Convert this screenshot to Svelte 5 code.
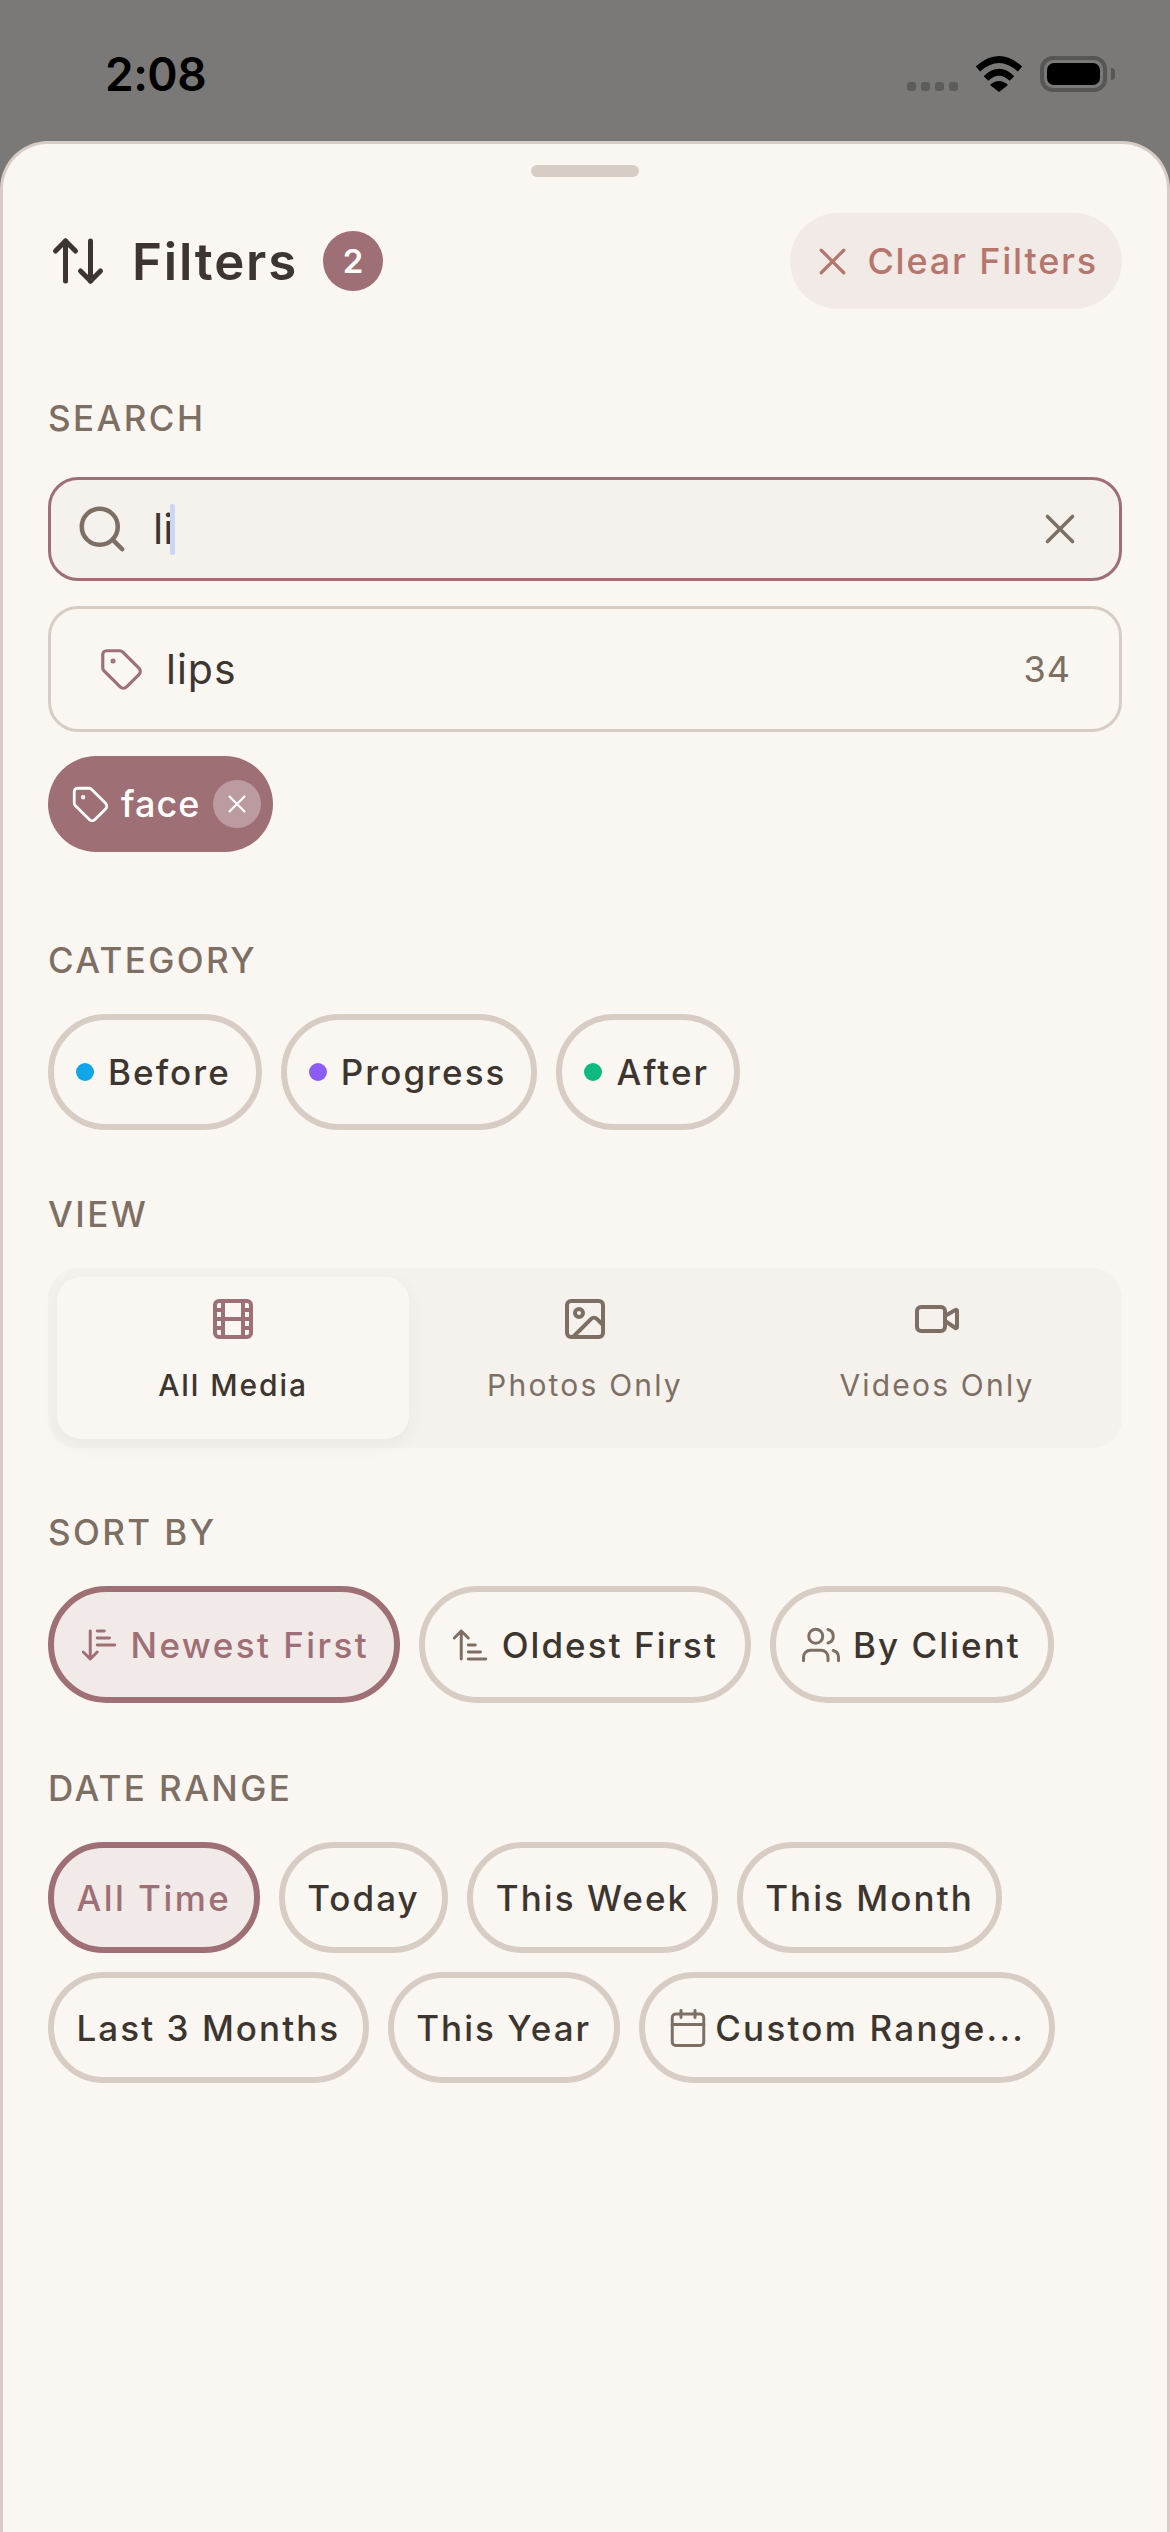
<script>
	const categories = [
		{ label: 'Before', color: '#0ea5e9' },
		{ label: 'Progress', color: '#8b5cf6' },
		{ label: 'After', color: '#10b981' }
	];
	const dates = ['All Time', 'Today', 'This Week', 'This Month', 'Last 3 Months', 'This Year'];
</script>

{#snippet tag(size)}
	<svg class="icon thin" width={size} height={size} viewBox="0 0 24 24">
		<path d="M12.586 2.586A2 2 0 0 0 11.172 2H4a2 2 0 0 0-2 2v7.172a2 2 0 0 0 .586 1.414l8.704 8.704a2.426 2.426 0 0 0 3.42 0l6.58-6.58a2.426 2.426 0 0 0 0-3.42z" />
		<circle cx="7.5" cy="7.5" r=".5" fill="currentColor" />
	</svg>
{/snippet}

{#snippet cross(size)}
	<svg class="icon thin" width={size} height={size} viewBox="0 0 24 24">
		<path d="M18 6 6 18" />
		<path d="m6 6 12 12" />
	</svg>
{/snippet}

<div class="screen">
	<div class="status">
		<span class="time">2:08</span>
		<div class="status-icons">
			<div class="signal"><i></i><i></i><i></i><i></i></div>
			<svg class="wifi" width="48" height="37" viewBox="0 0 48 37">
				<path d="M3 14Q24-5 45 14" fill="none" stroke="#000" stroke-width="6.5" />
				<path d="M11 23.500Q24 11 37 23.500" fill="none" stroke="#000" stroke-width="6.500" />
				<path d="M15 30Q24 22 33 30L24 37Z" fill="#000" />
			</svg>
			<div class="battery"><div class="cell"></div></div>
			<div class="nub"></div>
		</div>
	</div>

	<div class="sheet">
		<div class="handle"></div>

		<div class="header">
			<svg class="icon title-icon" width="60" height="60" viewBox="0 0 24 24">
				<path d="m21 16-4 4-4-4" />
				<path d="M17 20V4" />
				<path d="m3 8 4-4 4 4" />
				<path d="M7 4v16" />
			</svg>
			<h1>Filters</h1>
			<span class="badge">2</span>
			<button class="clear">
				{@render cross(45)}
				Clear Filters
			</button>
		</div>

		<section class="search">
			<h2 class="search-label">SEARCH</h2>
			<div class="input">
				<svg class="icon search-icon" width="54" height="54" viewBox="0 0 24 24">
					<circle cx="11" cy="11" r="8" />
					<path d="m21 21-4.300-4.300" />
				</svg>
				<span class="typed">li</span>
				<span class="caret"></span>
				<span class="input-clear">{@render cross(50)}</span>
			</div>
			<div class="suggestion">
				<span class="sug-tag">{@render tag(45)}</span>
				<span class="sug-name">lips</span>
				<span class="sug-count">34</span>
			</div>
			<div class="tag-chip">
				{@render tag(39)}
				<span class="tag-name">face</span>
				<span class="tag-remove">{@render cross(30)}</span>
			</div>
		</section>

		<section>
			<h2>CATEGORY</h2>
			<div class="chips">
				{#each categories as c}
					<button class="chip tall cat">
						<span class="dot" style="background: {c.color}"></span>
						{c.label}
					</button>
				{/each}
			</div>
		</section>

		<section>
			<h2>VIEW</h2>
			<div class="segments">
				<div class="segment active">
					<svg class="icon" width="48" height="48" viewBox="0 0 24 24">
						<rect x="3" y="3" width="18" height="18" rx="2" />
						<path d="M7 3v18M3 7.500h4M3 12h18M3 16.500h4M17 3v18M17 7.500h4M17 16.500h4" />
					</svg>
					<span>All Media</span>
				</div>
				<div class="segment">
					<svg class="icon" width="48" height="48" viewBox="0 0 24 24">
						<rect x="3" y="3" width="18" height="18" rx="2" />
						<circle cx="9" cy="9" r="2" />
						<path d="m21 15-3.086-3.086a2 2 0 0 0-2.828 0L6 21" />
					</svg>
					<span>Photos Only</span>
				</div>
				<div class="segment">
					<svg class="icon" width="48" height="48" viewBox="0 0 24 24">
						<path d="m16 13 5.223 3.482a.5.5 0 0 0 .777-.416V7.870a.5.5 0 0 0-.752-.432L16 10.500" />
						<rect x="2" y="6" width="14" height="12" rx="2" />
					</svg>
					<span>Videos Only</span>
				</div>
			</div>
		</section>

		<section>
			<h2>SORT BY</h2>
			<div class="chips">
				<button class="chip tall sort selected">
					<svg class="icon thin" width="42" height="42" viewBox="0 0 24 24">
						<path d="m3 16 4 4 4-4M7 20V4M11 4h4M11 8h7M11 12h10" />
					</svg>
					Newest First
				</button>
				<button class="chip tall sort">
					<svg class="icon thin muted" width="42" height="42" viewBox="0 0 24 24">
						<path d="m3 8 4-4 4 4M7 4v16M11 12h4M11 16h7M11 20h10" />
					</svg>
					Oldest First
				</button>
				<button class="chip tall sort">
					<svg class="icon thin muted" width="42" height="42" viewBox="0 0 24 24">
						<path d="M16 21v-2a4 4 0 0 0-4-4H6a4 4 0 0 0-4 4v2" />
						<circle cx="9" cy="7" r="4" />
						<path d="M22 21v-2a4 4 0 0 0-3-3.870" />
						<path d="M16 3.130a4 4 0 0 1 0 7.750" />
					</svg>
					By Client
				</button>
			</div>
		</section>

		<section class="date">
			<h2>DATE RANGE</h2>
			<div class="chips">
				{#each dates as d, i}
					<button class="chip" class:selected={i === 0}>{d}</button>
				{/each}
				<button class="chip custom">
					<svg class="icon thin muted" width="42" height="42" viewBox="0 0 24 24">
						<path d="M8 2v4M16 2v4M3 10h18" />
						<rect x="3" y="4" width="18" height="18" rx="2" />
					</svg>
					Custom Range...
				</button>
			</div>
		</section>
	</div>
</div>

<style>
	:global(body) {
		margin: 0;
	}

	.screen {
		width: 1170px;
		height: 2532px;
		display: flex;
		flex-direction: column;
		background: #7a7977;
		font-family: Inter, 'Noto Sans', sans-serif;
		color: #3d3530;
		overflow: hidden;
	}

	.status {
		height: 141px;
		flex-shrink: 0;
		box-sizing: border-box;
		padding: 50px 55px 0 105px;
		display: flex;
		justify-content: space-between;
		align-items: flex-start;
	}

	.time {
		font-size: 46px;
		line-height: 48px;
		font-weight: 600;
		color: #000;
		letter-spacing: -0.5px;
	}

	.status-icons {
		display: flex;
		align-items: flex-start;
		padding-top: 5px;
	}

	.signal {
		display: flex;
		gap: 5px;
		margin: 27px 17px 0 0;
	}

	.signal i {
		width: 9px;
		height: 9px;
		border-radius: 3px;
		background: #5c5c5b;
	}

	.wifi {
		margin-right: 17px;
	}

	.battery {
		width: 67px;
		height: 36px;
		box-sizing: border-box;
		border: 4px solid #565655;
		border-radius: 13px;
		padding: 3px;
		margin-top: 1px;
	}

	.cell {
		height: 100%;
		background: #000;
		border-radius: 7px;
	}

	.nub {
		width: 4px;
		height: 12px;
		margin: 13px 0 0 4px;
		border-radius: 0 6px 6px 0;
		background: #565655;
	}

	.sheet {
		flex: 1;
		box-sizing: border-box;
		background: #faf7f2;
		border: 3px solid #d7cdc4;
		border-bottom: none;
		border-radius: 48px 48px 0 0;
		padding: 0 45px;
	}

	.handle {
		width: 108px;
		height: 12px;
		margin: 21px auto 0;
		border-radius: 6px;
		background: #d7cdc4;
	}

	.header {
		display: flex;
		align-items: center;
		height: 96px;
		margin-top: 36px;
	}

	.title-icon {
		margin-right: 24px;
	}

	h1 {
		margin: 0;
		font-size: 51px;
		font-weight: 600;
		letter-spacing: 1.8px;
		color: #3d3530;
	}

	.badge {
		width: 60px;
		height: 60px;
		margin-left: 25px;
		border-radius: 50%;
		background: #9e7076;
		color: #fff;
		font-size: 33px;
		font-weight: 600;
		display: flex;
		align-items: center;
		justify-content: center;
	}

	button {
		font: inherit;
		background: none;
		margin: 0;
	}

	.clear {
		margin-left: auto;
		height: 96px;
		border: none;
		border-radius: 48px;
		padding: 0 24px 0 20px;
		background: #f2eae6;
		color: #b5766d;
		font-size: 36px;
		font-weight: 500;
		letter-spacing: 1.8px;
		display: flex;
		align-items: center;
		gap: 12px;
	}

	section {
		margin-top: 63px;
	}

	section.search {
		margin-top: 88px;
		margin-bottom: 87px;
	}

	section.date {
		margin-top: 64px;
	}

	h2 {
		margin: 0 0 33px;
		font-size: 35px;
		line-height: 42px;
		font-weight: 500;
		letter-spacing: 2.4px;
		color: #7d6f64;
	}

	.search-label {
		margin-bottom: 38px;
	}

	.icon {
		display: block;
		flex-shrink: 0;
		fill: none;
		stroke: currentColor;
		stroke-width: 2;
		stroke-linecap: round;
		stroke-linejoin: round;
	}

	.icon.thin {
		stroke-width: 1.7;
	}

	.muted {
		color: #7d6f64;
	}

	.input {
		height: 104px;
		box-sizing: border-box;
		background: #f5f2ed;
		border: 3px solid #9e7076;
		border-radius: 30px;
		padding: 0 34px 0 24px;
		display: flex;
		align-items: center;
	}

	.search-icon {
		color: #7d6f64;
	}

	.typed {
		margin-left: 24px;
		font-size: 42px;
		line-height: 48px;
	}

	.caret {
		width: 5px;
		height: 51px;
		border-radius: 2px;
		background: #cbd5f5;
		margin-left: -3px;
	}

	.input-clear {
		margin-left: auto;
		color: #7d6f64;
	}

	.suggestion {
		height: 126px;
		margin-top: 25px;
		box-sizing: border-box;
		border: 3px solid #d7cdc4;
		border-radius: 30px;
		padding: 0 48px 0 48px;
		display: flex;
		align-items: center;
	}

	.sug-tag {
		color: #9e7076;
	}

	.sug-name {
		margin-left: 22px;
		font-size: 41px;
		letter-spacing: 1px;
	}

	.sug-count {
		margin-left: auto;
		font-size: 36px;
		letter-spacing: 1px;
		color: #7d6f64;
	}

	.tag-chip {
		display: inline-flex;
		align-items: center;
		height: 96px;
		margin-top: 24px;
		box-sizing: border-box;
		padding: 0 12px 0 23px;
		border-radius: 48px;
		background: #9e7076;
		color: #fff;
		font-size: 36px;
		font-weight: 500;
		letter-spacing: 1px;
		vertical-align: top;
	}

	.tag-name {
		margin-left: 11px;
	}

	.tag-remove {
		width: 48px;
		height: 48px;
		margin-left: 13px;
		border-radius: 50%;
		background: rgba(255, 255, 255, 0.3);
		display: flex;
		align-items: center;
		justify-content: center;
	}

	.chips {
		display: flex;
		flex-wrap: wrap;
		gap: 19px;
	}

	.chip {
		display: flex;
		align-items: center;
		gap: 11px;
		padding: 28.5px 22.5px;
		border: 6px solid #d7cdc4;
		border-radius: 60px;
		font-size: 35px;
		line-height: 42px;
		font-weight: 500;
		letter-spacing: 2.05px;
		color: #3d3530;
	}

	.chip.tall {
		padding: 31px 27.5px 31px 23.5px;
	}

	.chip.cat {
		gap: 14px;
		padding-left: 22px;
		padding-right: 25px;
	}

	.chip.sort {
		padding-top: 31.5px;
		padding-bottom: 31.5px;
	}

	.chip.custom {
		gap: 6px;
		padding-right: 24px;
		letter-spacing: 2.25px;
	}

	.chip.selected {
		border-color: #9e7076;
		background: #f2eae8;
		color: #9e7076;
		letter-spacing: 2.45px;
	}

	.chip.sort.selected {
		padding-right: 25px;
	}

	.dot {
		width: 18px;
		height: 18px;
		border-radius: 50%;
	}

	.segments {
		display: flex;
		height: 180px;
		box-sizing: border-box;
		padding: 9px;
		border-radius: 30px;
		background: #f5f2ed;
	}

	.segment {
		flex: 1;
		box-sizing: border-box;
		padding-top: 18px;
		border-radius: 24px;
		display: flex;
		flex-direction: column;
		align-items: center;
		gap: 24px;
		font-size: 30px;
		line-height: 36px;
		font-weight: 400;
		letter-spacing: 2.2px;
		color: #7d6f64;
	}

	.segment.active {
		background: #faf7f2;
		color: #3d3530;
		font-weight: 500;
		letter-spacing: 1.9px;
		box-shadow: 0 6px 18px rgba(61, 53, 48, 0.05);
	}

	.segment.active svg {
		color: #9e7076;
	}
</style>
